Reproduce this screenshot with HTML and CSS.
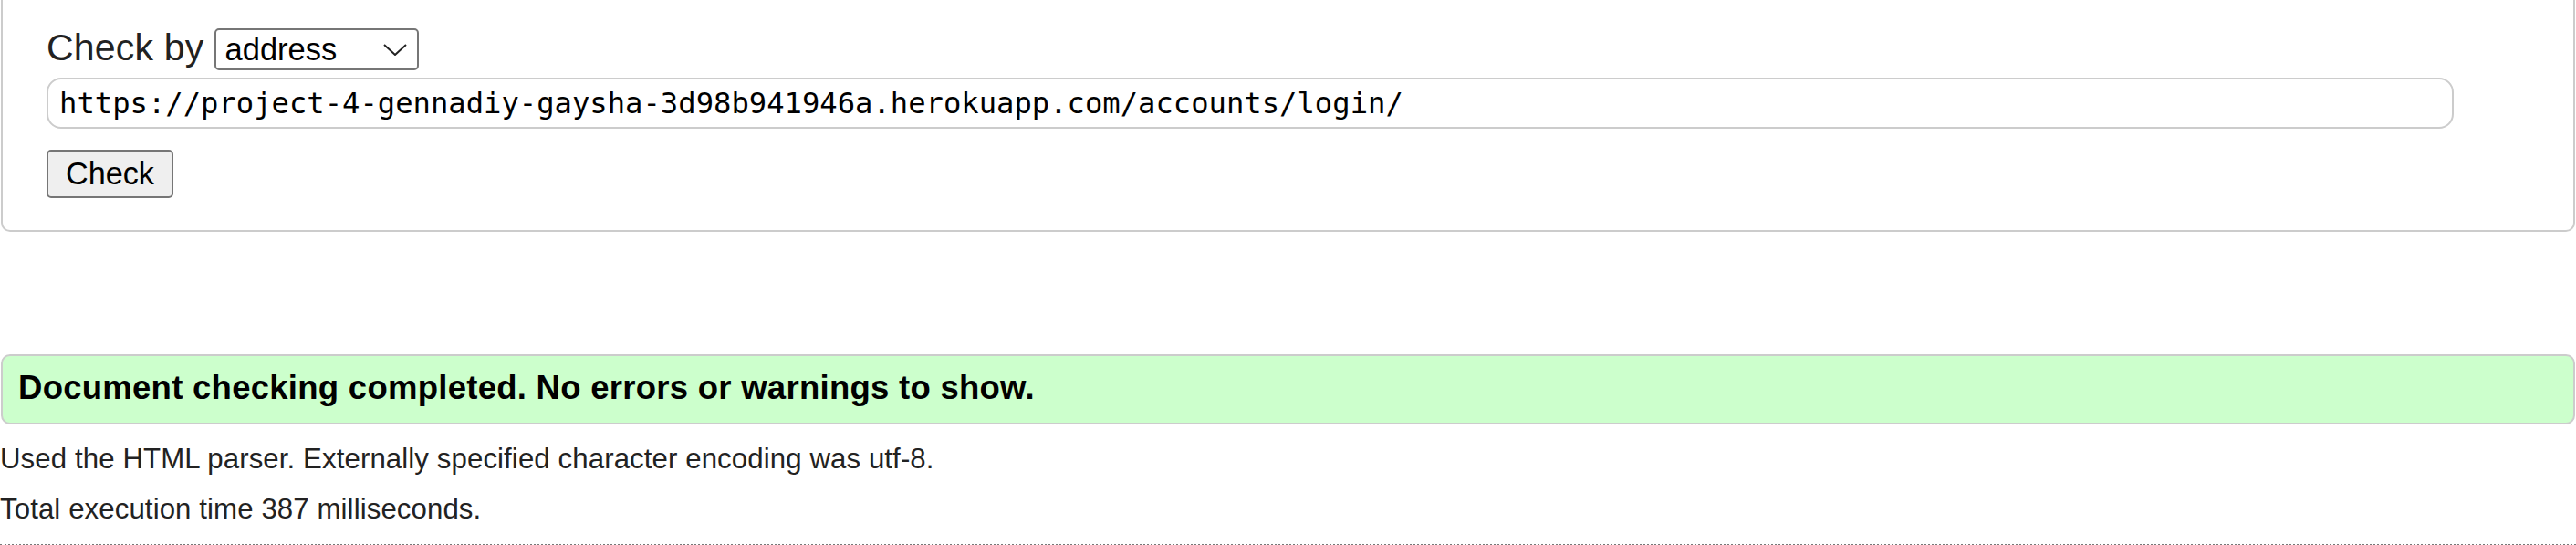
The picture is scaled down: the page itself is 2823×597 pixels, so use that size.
FILE: index.html
```html
<!DOCTYPE html>
<html lang="en">
<head>
<meta charset="utf-8">
<title>Nu Html Checker</title>
<link rel="stylesheet" href="styles.css">
</head>
<body>
<form class="panel">
  <div class="row">
    <label class="label" for="docselect">Check by</label>
    <span class="select-wrap">
      <select id="docselect" class="select">
        <option>address</option>
        <option>file upload</option>
        <option>text input</option>
      </select>
      <svg class="chev" width="26" height="13" viewBox="0 0 26 13"><path d="M1 1 L13 12 L25 1" fill="none" stroke="#222" stroke-width="2"/></svg>
    </span>
  </div>
  <div class="url-row">
    <input class="url" type="url" value="https://project-4-gennadiy-gaysha-3d98b941946a.herokuapp.com/accounts/login/">
  </div>
  <div class="submit-row">
    <button class="btn" type="button">Check</button>
  </div>
</form>

<div class="result">
  <p class="success">Document checking completed. No errors or warnings to show.</p>
</div>
<p class="details">Used the HTML parser. Externally specified character encoding was utf-8.</p>
<p class="details">Total execution time 387 milliseconds.</p>
<div class="footer"></div>
</body>
</html>
```
FILE: styles.css
```css
html, body {
  margin: 0;
  padding: 0;
  background: #fff;
}
body {
  font-family: "Liberation Sans", Arial, sans-serif;
  color: #222;
  overflow: hidden;
}
.panel {
  margin: 0 1px 0 1px;
  border: 2px solid #cccccc;
  border-top: 0;
  border-radius: 0 0 10px 10px;
  padding: 29px 48px 35px 48px;
}
.row {
  display: flex;
  align-items: baseline;
  gap: 11px;
}
.label {
  font-size: 41px;
  letter-spacing: 0.2px;
  color: #222;
}
.select-wrap {
  position: relative;
  display: inline-block;
}
.select {
  appearance: none;
  -webkit-appearance: none;
  box-sizing: border-box;
  width: 224px;
  height: 46px;
  font-family: "Liberation Sans", Arial, sans-serif;
  font-size: 34.5px;
  color: #000;
  background: #fff;
  border: 2px solid #767676;
  border-radius: 5px;
  padding: 0 0 0 10px;
  margin: 0;
}
.chev {
  position: absolute;
  left: 185px;
  top: 17px;
  pointer-events: none;
}
.url-row {
  margin-top: 8px;
}
.url {
  box-sizing: border-box;
  width: 2638px;
  height: 56px;
  border: 2px solid #cccccc;
  border-radius: 16px;
  padding: 0 12px;
  margin: 0;
  font-family: "DejaVu Sans Mono", "Liberation Mono", monospace;
  font-size: 32.2px;
  color: #000;
  background: #fff;
}
.submit-row {
  margin-top: 23px;
}
.btn {
  box-sizing: border-box;
  height: 53px;
  width: 139px;
  font-family: "Liberation Sans", Arial, sans-serif;
  font-size: 34.2px;
  color: #000;
  background: #efefef;
  border: 2px solid #767676;
  border-radius: 5px;
  padding: 0;
  margin: 0;
}
.result {
  margin: 134px 1px 0 1px;
  border: 2px solid #cccccc;
  border-radius: 10px;
  background: #ccffcc;
  padding: 14px 17px 17px 17px;
}
.success {
  margin: 0;
  font-size: 36.5px;
  letter-spacing: 0.27px;
  font-weight: bold;
  color: #000;
}
.details {
  margin: 19.5px 0;
  font-size: 31.2px;
  letter-spacing: 0.1px;
  color: #222;
}
.footer {
  border-top: 2px dotted #777;
}
```
